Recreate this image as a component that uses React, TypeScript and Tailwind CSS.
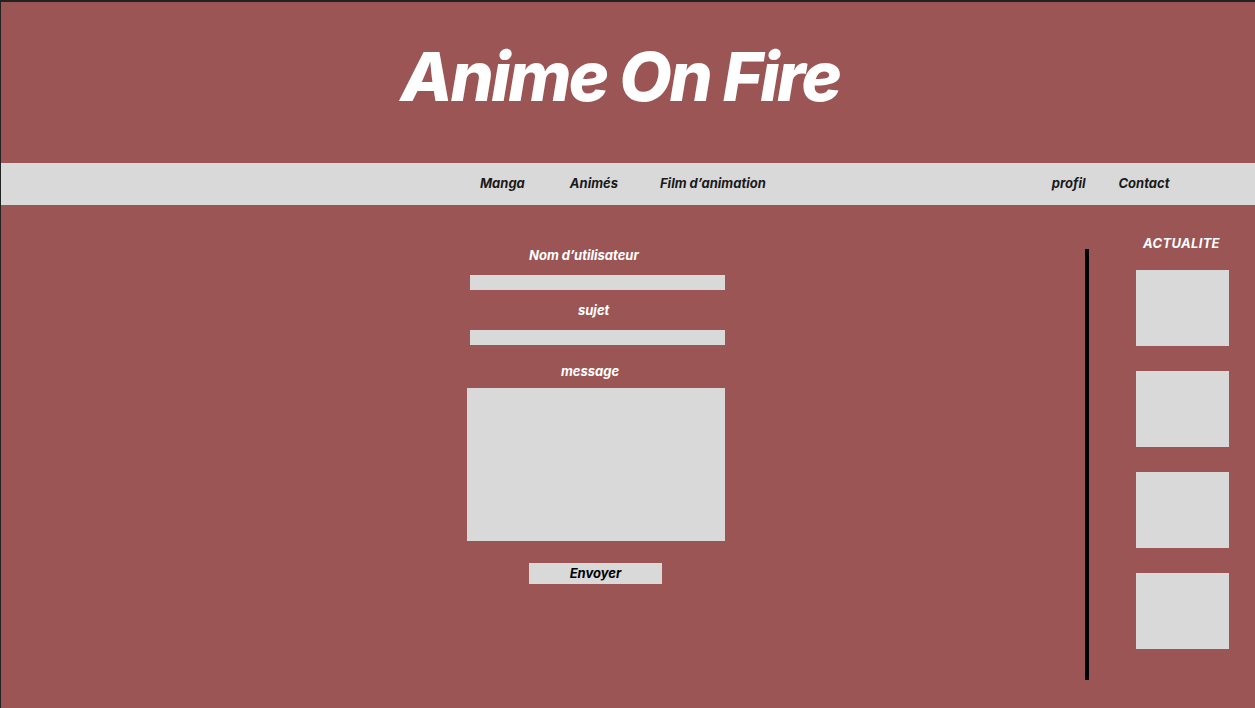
const font = { fontFamily: 'Inter, "Liberation Sans", sans-serif' };

function Field({ label, pl, children }: { label: string; pl: string; children: React.ReactNode }) {
  return (
    <div className="flex flex-col">
      <div className={`text-[13px] leading-4 font-bold italic text-white ${pl}`}>{label}</div>
      {children}
    </div>
  );
}

export default function App() {
  return (
    <div className="w-[1255px] h-[708px] overflow-hidden bg-[#9b5555] border-t-2 border-l border-[#222222] flex flex-col" style={font}>
      <header className="h-[161px] flex items-center justify-center">
        <h1 className="text-[68px] leading-none font-extrabold italic text-white tracking-[-2.4px] -mt-[14px] pr-[16px]">
          Anime On Fire
        </h1>
      </header>

      <nav className="h-[42px] bg-[#d9d9d9] flex items-center text-[13px] font-bold italic text-[#1a1a1a] pb-[1px]">
        <span className="ml-[479px]">Manga</span>
        <span className="ml-[45px]">Animés</span>
        <span className="ml-[42px]">Film d’animation</span>
        <span className="ml-[286px]">profil</span>
        <span className="ml-[33px]">Contact</span>
      </nav>

      <main className="flex-1 flex">
        <form className="ml-[466px] w-[258px] flex flex-col pt-[42px]">
          <Field label="Nom d’utilisateur" pl="pl-[62px]">
            <div className="mt-[12px] ml-[3px] h-[15px] bg-[#d9d9d9]" />
          </Field>
          <Field label="sujet" pl="pl-[111px] mt-[12px]">
            <div className="mt-[12px] ml-[3px] h-[15px] bg-[#d9d9d9]" />
          </Field>
          <Field label="message" pl="pl-[94px] mt-[18px]">
            <div className="mt-[9px] h-[153px] bg-[#d9d9d9]" />
          </Field>
          <button
            type="button"
            className="mt-[22px] ml-[62px] w-[133px] h-[21px] bg-[#d9d9d9] text-[13px] leading-none font-bold italic text-black"
          >
            Envoyer
          </button>
        </form>

        <div className="flex-1" />

        <div className="w-[4px] mt-[44px] h-[431px] bg-black" />

        <aside className="ml-[47px] w-[93px] flex flex-col items-center pt-[30px]">
          <div className="text-[13px] leading-4 font-bold italic text-white tracking-[0.3px] pr-[2px]">ACTUALITE</div>
          <div className="mt-[19px] flex flex-col gap-[25px]">
            {[...Array(4)].map((_, i) => (
              <div key={i} className="w-[93px] h-[76px] bg-[#d9d9d9]" />
            ))}
          </div>
        </aside>
        <div className="w-[26px]" />
      </main>
    </div>
  );
}
